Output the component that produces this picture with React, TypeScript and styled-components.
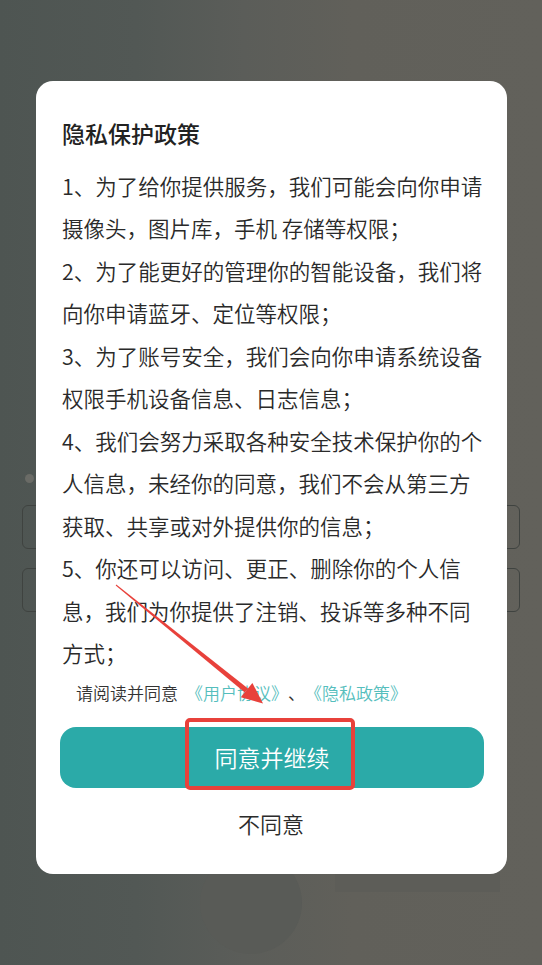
import React, { FC } from 'react';
import styled, { createGlobalStyle } from 'styled-components';

const GlobalStyle = createGlobalStyle`
    html, body {
        margin: 0;
        padding: 0;
        width: 542px;
        height: 965px;
        overflow: hidden;
    }
    * {
        box-sizing: border-box;
        text-spacing-trim: space-all;
    }
`;

const paragraphs: string[][] = [
    ['1、为了给你提供服务，我们可能会向你申请', '摄像头，图片库，手机 存储等权限；'],
    ['2、为了能更好的管理你的智能设备，我们将', '向你申请蓝牙、定位等权限；'],
    ['3、为了账号安全，我们会向你申请系统设备', '权限手机设备信息、日志信息；'],
    ['4、我们会努力采取各种安全技术保护你的个', '人信息，未经你的同意，我们不会从第三方', '获取、共享或对外提供你的信息；'],
    ['5、你还可以访问、更正、删除你的个人信', '息，我们为你提供了注销、投诉等多种不同', '方式；'],
];

const App: FC = () => {
    return (
        <Screen>
            <GlobalStyle />
            <BehindPage>
                <Dot />
                <GhostInput />
                <GhostInput />
                <GhostLogins>
                    <GhostCircle />
                    <GhostBlock />
                </GhostLogins>
            </BehindPage>
            <Overlay>
                <Dialog>
                    <Title>隐私保护政策</Title>
                    <Body>
                        {paragraphs.map((lines, i) => (
                            <Paragraph key={i}>
                                {lines.map((line, j) => (
                                    <Line key={j}>{line}</Line>
                                ))}
                            </Paragraph>
                        ))}
                    </Body>
                    <Agreement>
                        请阅读并同意<Gap /><Link>《用户协议》</Link>、<Link>《隐私政策》</Link>
                    </Agreement>
                    <PrimaryButton>同意并继续</PrimaryButton>
                    <SecondaryButton>不同意</SecondaryButton>
                </Dialog>
            </Overlay>
            <HighlightBox />
            <Annotation viewBox="0 0 542 965" width={542} height={965}>
                <polygon
                    fill="#e8413b"
                    points="115.7,585.4 116.3,584.6 248,688.4 244.8,692.4"
                />
                <polygon fill="#e8413b" points="263,703.5 240.8,697.2 252.4,683" />
            </Annotation>
        </Screen>
    );
};

export default App;

const Screen = styled.div`
    position: relative;
    width: 542px;
    height: 965px;
    overflow: hidden;
    background: linear-gradient(90deg, #4e5552 0%, #525855 25%, #5b5d59 45%, #61605a 65%, #62615b 100%);
    font-family: 'Noto Sans CJK SC', 'Noto Sans', sans-serif;
`;

const BehindPage = styled.div`
    padding: 474px 22px 0;
    display: flex;
    flex-direction: column;
`;

const Dot = styled.div`
    width: 9px;
    height: 9px;
    margin-left: 3px;
    border-radius: 50%;
    background: #6a6b66;
`;

const GhostInput = styled.div`
    height: 44px;
    margin-top: 22px;
    border: 1px solid #3f4340;
    border-radius: 6px;
    width: 498px;

    & + & {
        margin-top: 19px;
    }
`;

const GhostLogins = styled.div`
    display: flex;
    margin-top: 240px;
    padding-left: 178px;
    gap: 33px;
    align-items: flex-start;
`;

const GhostCircle = styled.div`
    width: 102px;
    height: 102px;
    border-radius: 50%;
    background: #595b57;
`;

const GhostBlock = styled.div`
    width: 165px;
    height: 40px;
    background: #5d5d58;
`;

const Overlay = styled.div`
    position: absolute;
    inset: 0;
    display: flex;
    flex-direction: column;
    align-items: flex-start;
    padding: 81px 0 0 36px;
`;

const Dialog = styled.div`
    width: 471px;
    height: 793px;
    background: #ffffff;
    border-radius: 17px;
    padding: 37px 23px 0 26px;
    display: flex;
    flex-direction: column;
`;

const Title = styled.div`
    font-size: 23px;
    line-height: 30px;
    font-weight: 500;
    color: #222222;
`;

const Body = styled.div`
    margin-top: 16.75px;
    display: flex;
    flex-direction: column;
`;

const Paragraph = styled.div`
    display: flex;
    flex-direction: column;
`;

const Line = styled.div`
    font-size: 21.5px;
    line-height: 42.5px;
    font-weight: 350;
    color: #2a2a2a;
    white-space: nowrap;
`;

const Agreement = styled.div`
    margin-top: 6px;
    padding-left: 14px;
    font-size: 17px;
    line-height: 24px;
    font-weight: 350;
    color: #333333;
    white-space: nowrap;
`;

const Gap = styled.span`
    display: inline-block;
    width: 8px;
`;

const Link = styled.span`
    color: #55bebd;
`;

const PrimaryButton = styled.div`
    margin: 22px 0 0 -2px;
    width: 424px;
    height: 61px;
    border-radius: 16px;
    background: #2baaa8;
    color: #ffffff;
    font-size: 23px;
    font-weight: 350;
    display: flex;
    align-items: center;
    justify-content: center;
`;

const SecondaryButton = styled.div`
    margin-top: 20px;
    height: 30px;
    font-size: 22px;
    line-height: 30px;
    font-weight: 350;
    color: #2b2b2b;
    text-align: center;
    margin-left: -3px;
    width: 424px;
`;

const HighlightBox = styled.div`
    position: absolute;
    left: 185px;
    top: 718px;
    width: 170px;
    height: 72px;
    border: 4px solid #e8413b;
    border-radius: 5px;
`;

const Annotation = styled.svg`
    position: absolute;
    left: 0;
    top: 0;
    pointer-events: none;
`;
